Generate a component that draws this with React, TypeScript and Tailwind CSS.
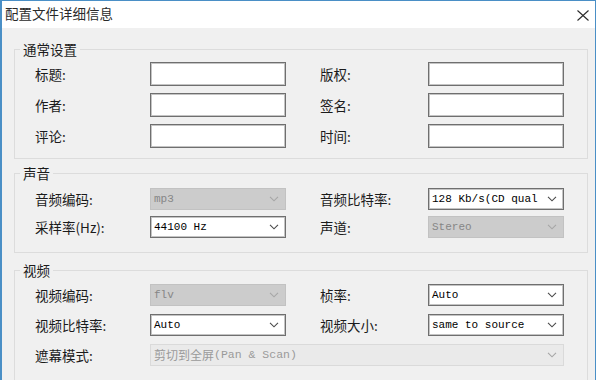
import React from "react";

const cjk = { fontFamily: '"Noto Sans CJK SC", "Noto Sans", sans-serif' };
const mono = { fontFamily: '"Liberation Mono", "Noto Sans CJK SC", monospace' };

function Chevron({ color }: { color: string }) {
  return (
    <svg width="10" height="6" viewBox="0 0 10 6" className="shrink-0">
      <path d="M1 0.8 L5 4.8 L9 0.8" fill="none" stroke={color} strokeWidth="1.1" />
    </svg>
  );
}

function TextBox() {
  return (
    <div className="h-[24px] w-[136px] bg-white border border-[#6f6f6f] shadow-[inset_0_0_0_1px_#c4c4c4]" />
  );
}

function Select({
  value,
  disabled,
  wide,
  light,
}: {
  value: string;
  disabled?: boolean;
  wide?: boolean;
  light?: boolean;
}) {
  let cls = "bg-white border-[#6f6f6f] text-black shadow-[inset_0_0_0_1px_#c4c4c4]";
  if (disabled) cls = "bg-[#cccccc] border-[#c2c2c2] text-[#868686]";
  if (light) cls = "bg-[#eaeaea] border-[#dadada] text-[#9a9a9a]";
  return (
    <div
      className={`h-[22px] ${wide ? "w-full" : "w-[136px]"} border flex items-center pl-[3px] pr-[6px] ${cls}`}
    >
      {light ? (
        <span className="flex-1 whitespace-nowrap leading-[16px] flex items-center">
          <span className="text-[12px] leading-[16px]" style={cjk}>
            剪切到全屏
          </span>
          <span className="text-[11.5px] leading-[16px]" style={mono}>
            (Pan &amp; Scan)
          </span>
        </span>
      ) : (
        <span className="flex-1 whitespace-nowrap text-[11px] leading-[14px]" style={mono}>
          {value}
        </span>
      )}
      <Chevron color={disabled || light ? "#a6a6a6" : "#4a4a4a"} />
    </div>
  );
}

function Label({ text, right }: { text: string; right?: boolean }) {
  return (
    <div
      className={`text-[13.5px] leading-[16px] text-[#1b1b1b] whitespace-nowrap ${right ? "pl-[34px]" : ""}`}
      style={cjk}
    >
      {text}
    </div>
  );
}

function Group({
  title,
  children,
  className,
  inner,
}: {
  title: string;
  children: React.ReactNode;
  className?: string;
  inner: string;
}) {
  return (
    <fieldset className={`border border-[#dcdcdc] w-[574px] ${className ?? ""}`}>
      <legend
        className="ml-[5px] px-[3px] text-[13.5px] leading-[16px] text-[#1b1b1b]"
        style={cjk}
      >
        {title}
      </legend>
      <div
        className={`grid grid-cols-[115px_136px_142px_136px] items-center pl-[20px] ${inner}`}
      >
        {children}
      </div>
    </fieldset>
  );
}

export default function App() {
  return (
    <div className="w-[600px] h-[380px] bg-white overflow-hidden flex">
      <div className="w-[596px] h-full border-l-2 border-t border-r border-[#4a8fc6] flex flex-col">
        <div className="h-[27px] bg-white flex items-center justify-between pl-[3px] pr-[6px] shrink-0">
          <span className="text-[13.5px] leading-none text-[#2a2a2a] -mt-[1px]" style={cjk}>
            配置文件详细信息
          </span>
          <svg width="12" height="11" viewBox="0 0 12 11" className="mt-[2px]">
            <path d="M0.5 0.5 L11.5 10.5 M11.5 0.5 L0.5 10.5" stroke="#2a2a2a" strokeWidth="1.1" />
          </svg>
        </div>
        <div className="flex-1 bg-[#f0f0f0] pl-[12px] pt-[13px] flex flex-col">
          <Group title="通常设置" inner="pt-[5px] pb-[10px] gap-y-[7px]">
            <Label text="标题:" />
            <TextBox />
            <Label text="版权:" right />
            <TextBox />
            <Label text="作者:" />
            <TextBox />
            <Label text="签名:" right />
            <TextBox />
            <Label text="评论:" />
            <TextBox />
            <Label text="时间:" right />
            <TextBox />
          </Group>
          <Group title="声音" className="mt-[6px]" inner="pt-[7px] pb-[14px] gap-y-[6px]">
            <Label text="音频编码:" />
            <Select value="mp3" disabled />
            <Label text="音频比特率:" right />
            <Select value="128 Kb/s(CD qual" />
            <Label text="采样率(Hz):" />
            <Select value="44100 Hz" />
            <Label text="声道:" right />
            <Select value="Stereo" disabled />
          </Group>
          <Group title="视频" className="mt-[9px]" inner="pt-[6px] pb-[14px] gap-y-[8px]">
            <Label text="视频编码:" />
            <Select value="flv" disabled />
            <Label text="桢率:" right />
            <Select value="Auto" />
            <Label text="视频比特率:" />
            <Select value="Auto" />
            <Label text="视频大小:" right />
            <Select value="same to source" />
            <Label text="遮幕模式:" />
            <div className="col-span-3">
              <Select value="" light wide />
            </div>
          </Group>
        </div>
      </div>
    </div>
  );
}
